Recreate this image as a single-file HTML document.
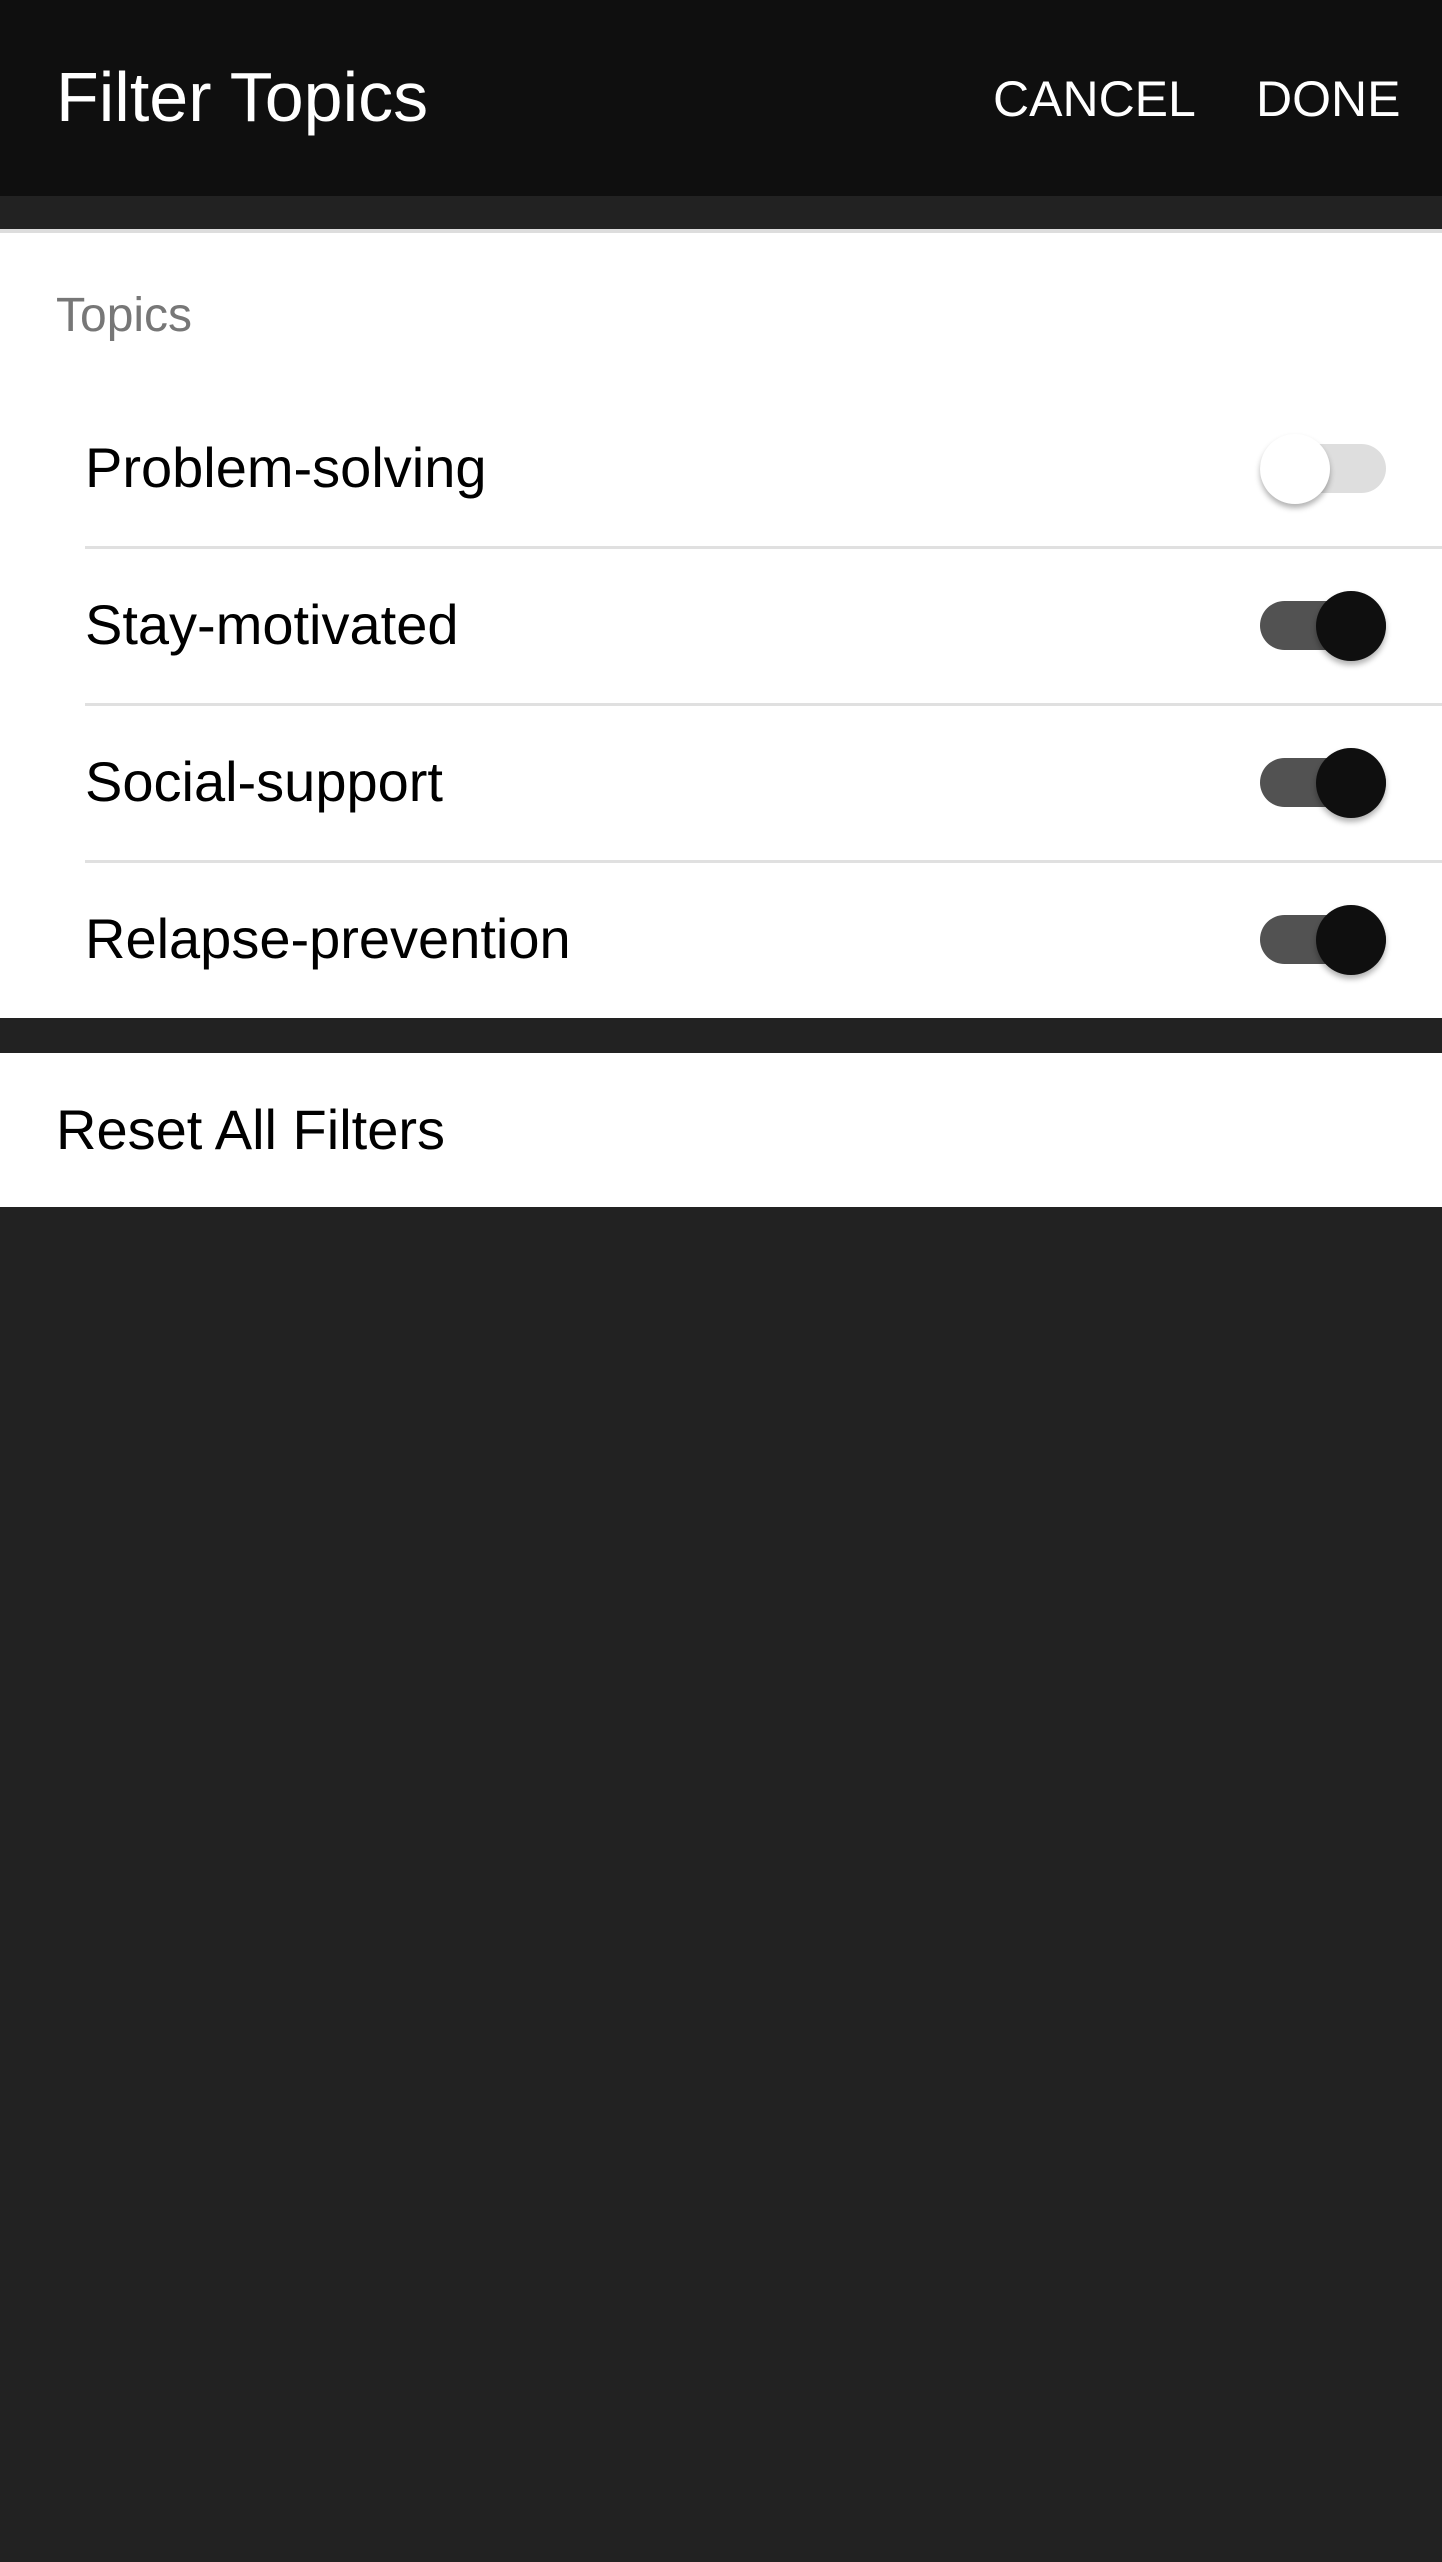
<!DOCTYPE html>
<html><head><meta charset="utf-8"><style>
*{margin:0;padding:0;box-sizing:border-box}
body{width:1442px;height:2562px;background:#222;font-family:"Liberation Sans",sans-serif;position:relative;overflow:hidden}
.hdr{position:absolute;left:0;top:0;width:1442px;height:196px;background:#0f0f0f}
.t{position:absolute;white-space:nowrap;line-height:1}
.panel{position:absolute;left:0;width:1442px;background:#fff}
.sep{position:absolute;left:85px;right:0;height:3px;background:#e0e0e0}
.track{position:absolute;left:1260px;width:126px;height:49px;border-radius:25px}
.knob{position:absolute;width:70px;height:70px;border-radius:50%;box-shadow:0 4px 6px rgba(0,0,0,0.3)}
</style></head><body>
<div class="hdr"></div>
<div class="t" style="left:56px;top:62px;font-size:70px;color:#fff">Filter Topics</div>
<div class="t" style="left:993px;top:74px;font-size:50px;color:#fff">CANCEL</div>
<div class="t" style="left:1256px;top:74px;font-size:50px;color:#fff">DONE</div>
<div style="position:absolute;left:0;top:229px;width:1442px;height:4px;background:#ddd"></div>
<div class="panel" style="top:233px;height:785px"></div>
<div class="t" style="left:56px;top:292px;font-size:48px;color:#777">Topics</div>

<div class="t" style="left:85px;top:440px;font-size:56px;color:#000">Problem-solving</div>
<div class="sep" style="top:546px"></div>
<div class="track" style="top:444px;background:#dedede"></div>
<div class="knob" style="left:1260px;top:434px;background:#fff"></div>

<div class="t" style="left:85px;top:597px;font-size:56px;color:#000">Stay-motivated</div>
<div class="sep" style="top:703px"></div>
<div class="track" style="top:601px;background:#525252"></div>
<div class="knob" style="left:1316px;top:591px;background:#0f0f0f"></div>

<div class="t" style="left:85px;top:754px;font-size:56px;color:#000">Social-support</div>
<div class="sep" style="top:860px"></div>
<div class="track" style="top:758px;background:#525252"></div>
<div class="knob" style="left:1316px;top:748px;background:#0f0f0f"></div>

<div class="t" style="left:85px;top:911px;font-size:56px;color:#000">Relapse-prevention</div>
<div class="track" style="top:915px;background:#525252"></div>
<div class="knob" style="left:1316px;top:905px;background:#0f0f0f"></div>

<div class="panel" style="top:1053px;height:154px"></div>
<div class="t" style="left:56px;top:1102px;font-size:56px;color:#000">Reset All Filters</div>
</body></html>
